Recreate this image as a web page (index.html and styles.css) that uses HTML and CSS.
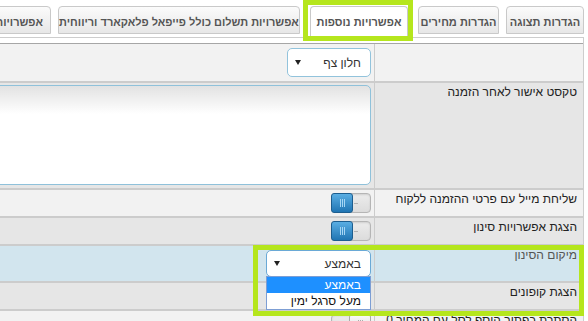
FILE: index.html
```html
<!DOCTYPE html>
<html lang="he" dir="rtl">
<head>
    <meta charset="UTF-8">
    <meta name="viewport" content="width=device-width, initial-scale=1.0">
    <title>הגדרות חנות</title>
    <link rel="stylesheet" href="styles.css">
</head>
<body>

    <div class="page">
        <ul class="tabs">
            <li class="tab tab-display">הגדרות תצוגה</li>
            <li class="tab tab-prices">הגדרות מחירים</li>
            <li class="tab tab-more active">אפשרויות נוספות</li>
            <li class="tab tab-payment">אפשרויות תשלום כולל פייפאל פלאקארד וריווחית</li>
            <li class="tab">אפשרויות משלוח</li>
        </ul>

        <div class="panel">
            <div class="settings">
                <div class="row">
                    <div class="label"></div>
                    <div class="value">
                        <div class="select">
                            <span>חלון צף</span>
                            <span class="caret"></span>
                        </div>
                    </div>
                </div>

                <div class="row">
                    <div class="label">טקסט אישור לאחר הזמנה</div>
                    <div class="value value-text">
                        <textarea class="note"></textarea>
                    </div>
                </div>

                <div class="row">
                    <div class="label">שליחת מייל עם פרטי ההזמנה ללקוח</div>
                    <div class="value value-toggle">
                        <span class="toggle on"><span class="knob"></span><span class="dash"></span></span>
                    </div>
                </div>

                <div class="row">
                    <div class="label">הצגת אפשרויות סינון</div>
                    <div class="value value-toggle">
                        <span class="toggle on"><span class="knob"></span><span class="dash"></span></span>
                    </div>
                </div>

                <div class="row focus">
                    <div class="label">מיקום הסינון</div>
                    <div class="value">
                        <div class="select select-open">
                            <span>באמצע</span>
                            <span class="caret"></span>
                            <ul class="options">
                                <li class="selected">באמצע</li>
                                <li>מעל סרגל ימין</li>
                            </ul>
                        </div>
                    </div>
                </div>

                <div class="row">
                    <div class="label">הצגת קופונים</div>
                    <div class="value value-toggle">
                        <span class="toggle on"><span class="knob"></span><span class="dash"></span></span>
                    </div>
                </div>

                <div class="row">
                    <div class="label">הסתרת כפתור הוסף לסל עם המחיר 0</div>
                    <div class="value value-toggle">
                        <span class="toggle off"><span class="dash"></span><span class="knob"></span></span>
                    </div>
                </div>
            </div>
        </div>

        <!-- highlight frames -->
        <div class="mark mark-tab"></div>
        <div class="mark mark-row"></div>
    </div>

</body>
</html>
```

FILE: styles.css
```css
* {
    box-sizing: border-box;
}

body {
    margin: 0 4px 0 0;
    background: #fff;
    color: #333;
    font-family: "Liberation Sans", Arial, sans-serif;
    overflow: hidden;
}

.page {
    position: relative;
    height: 321px;
    overflow: hidden;
}

/* tabs */
.tabs {
    display: flex;
    align-items: flex-start;
    gap: 7px;
    height: 37px;
    margin: 0;
    padding: 6px 0 0;
    list-style: none;
}

.tab {
    flex-shrink: 0;
    height: 28px;
    padding: 7px 7px 0;
    border: 1px solid #c9c9c9;
    border-radius: 4px 4px 0 0;
    background: linear-gradient(#fbfbfb, #e7e7e7);
    color: #555;
    font-size: 11px;
    font-weight: bold;
    line-height: 17px;
    text-align: center;
    white-space: nowrap;
}

.tab-display { width: 78px; padding: 7px 0 0; }
.tab-prices { width: 81px; padding: 7px 0 0; }
.tab-more { width: 98px; padding: 7px 0 0; }
.tab-payment { width: 242px; padding: 7px 0 0; }

.tab.active {
    position: relative;
    z-index: 1;
    height: 32px;
    margin: 0 3px;
    border-bottom: 0;
    background: #fff;
}

/* settings table */
.panel {
    border-top: 1px solid #cdcdcd;
    border-right: 1px solid #cdcdcd;
    padding-top: 5px;
}

.settings {
    display: flex;
    flex-direction: column;
    gap: 2px;
    background: #ccc;
    border-top: 1px solid #a6a6a6;
}

.row {
    display: flex;
    gap: 1px;
}

.row > div {
    background: #f2f2f2;
}

.row:nth-child(even) > div {
    background: #e6e6e6;
}

.row.focus > div {
    background: #d2e5ee;
}

.label {
    flex: 0 0 208px;
    padding: 2px 6px;
    color: #222;
    font-size: 12px;
    line-height: 14px;
}

.row.focus .label {
    color: #555;
}

.value {
    flex: 1;
    min-width: 0;
    display: flex;
    align-items: flex-start;
    padding: 4px 3px;
}

.value-text {
    padding: 2px 3px 3px;
}

.value-toggle {
    padding: 3px;
}

/* select boxes */
.select {
    position: relative;
    display: flex;
    align-items: center;
    justify-content: space-between;
    width: 84px;
    height: 29px;
    padding: 0 9px 0 7px;
    border: 1px solid #92c3dc;
    border-radius: 5px;
    background: #fff;
    color: #333;
    font-size: 12px;
}

.caret {
    width: 0;
    height: 0;
    border-top: 5px solid #222;
    border-left: 3px solid transparent;
    border-right: 3px solid transparent;
}

.select-open {
    width: 105px;
    height: 27px;
    border-color: #6aa9d6;
}

.options {
    position: absolute;
    z-index: 2;
    top: 100%;
    right: -1px;
    width: 105px;
    margin: 0;
    padding: 0;
    list-style: none;
    border: 1px solid #7d9ed4;
    background: #fff;
    color: #111;
    font-size: 12px;
}

.options li {
    height: 16px;
    padding-right: 9px;
    line-height: 16px;
}

.options .selected {
    background: #1e90ff;
    color: #fff;
}

/* textarea */
.note {
    flex-shrink: 0;
    width: 480px;
    height: 100px;
    margin: 0;
    border: 1px solid #8fc1da;
    border-radius: 5px;
    background: linear-gradient(#e2e2e2, #fff 28px);
    resize: none;
    outline: none;
}

/* toggles */
.toggle {
    display: flex;
    align-items: center;
    direction: ltr;
    width: 40px;
    height: 20px;
    border: 1px solid #b5b5b5;
    border-radius: 4px;
    background: linear-gradient(#ececec, #dcdcdc);
    box-shadow: inset 0 1px 2px rgba(0, 0, 0, 0.12);
}

.knob {
    display: flex;
    align-items: center;
    justify-content: center;
    width: 22px;
    height: 20px;
    margin: -1px;
    border: 1px solid #1d5e8f;
    border-radius: 3px;
    background: linear-gradient(#5aaee3, #2075b3);
}

.knob::before {
    content: "";
    width: 5px;
    height: 8px;
    background: repeating-linear-gradient(90deg, #a6d6f4 0 1px, transparent 1px 2px);
}

.dash {
    width: 4px;
    height: 1px;
    margin-left: 2px;
    background: #b3b3b3;
}

.toggle.off {
    justify-content: space-between;
}

.toggle.off .knob {
    border-color: #aaa;
    background: linear-gradient(#fafafa, #dadada);
}

.toggle.off .knob::before {
    background: repeating-linear-gradient(90deg, #aaa 0 1px, transparent 1px 2px);
}

/* green highlight frames */
.mark {
    position: absolute;
    z-index: 3;
    border: 5px solid #b5e61d;
    pointer-events: none;
}

.mark-tab {
    top: 0;
    left: 303px;
    width: 110px;
    height: 41px;
}

.mark-row {
    top: 245px;
    left: 253px;
    width: 331px;
    height: 71px;
}
```
